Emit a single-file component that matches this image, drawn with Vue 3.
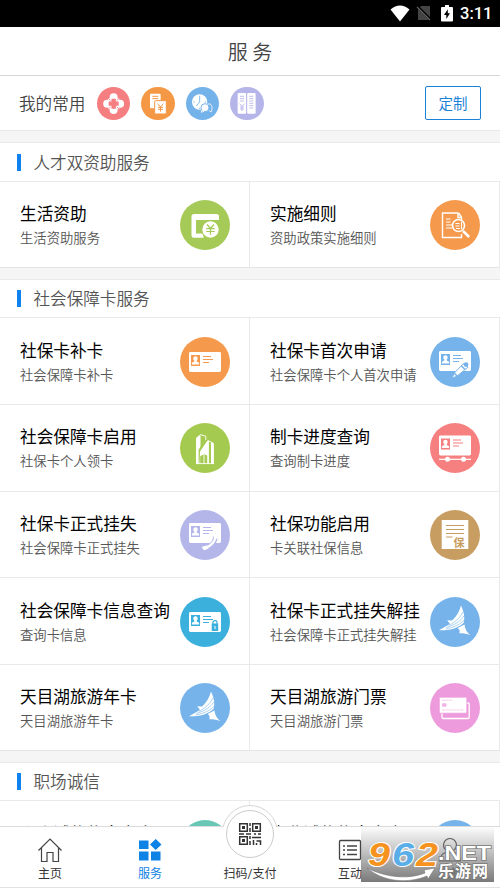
<script setup>
const card = (y = 15, h = 20) => `
  <rect x="9" y="${y}" width="32" height="${h}" rx="1.4" fill="#fff"/>
  <rect x="11" y="${y + 3}" width="9" height="11" fill="currentColor"/>
  <path transform="translate(0 ${y - 15})" d="M15.5 19.2c1.5 0 2.3 1 2.1 2.5-.1 1-.6 1.5-.9 1.9v1l2.4 1.1v1.8h-7.2v-1.8l2.4-1.1v-1c-.4-.4-.9-.9-1-1.9-.1-1.500.7-2.500 2.200-2.500z" fill="#fff"/>
  <path d="M23 ${y + 4.500}h8M23 ${y + 7.500}h10M23 ${y + 10.500}h6" stroke="currentColor" stroke-width="1.200" fill="none"/>`

const bird = `
  <path fill="#fff" d="M31 8.500C34 15 35.200 20.500 33.500 26 28 31.500 19 33.500 9 33.300L20 27l-2.800-3.700 5 .2C26.500 19.500 29.500 14.500 31 8.500z"/>
  <path fill="#fff" d="M27.500 31l7-3.500c.4 4.500 2.400 8 5.800 10.600-4-1.500-7.200-2.100-11-1.900 1-2.200.2-4-1.800-5.200z"/>
  <path d="M32.800 15c-2 5-6.500 9.500-14 13.500M33.800 19c-3 5-9 9-17.500 11.500M34.200 23c-4 4.500-10.500 7.500-18.500 9" fill="none" stroke="currentColor" stroke-width=".6"/>`

const art = {
  flower: `<g fill="#fff"><circle cx="25" cy="15.300" r="6"/><circle cx="25" cy="34.700" r="6"/><circle cx="15.300" cy="25" r="6"/><circle cx="34.700" cy="25" r="6"/><rect x="16.500" y="16.500" width="17" height="17" rx="1"/></g><path d="M25 17.500v15M17.500 25h15" stroke="currentColor" stroke-width="6.500" fill="none"/><path d="M15.500 15.500l5 5M34.500 15.500l-5 5M15.500 34.500l5-5M34.500 34.500l-5-5" stroke="currentColor" stroke-width="1.300"/>`,
  bills: `<rect x="13.500" y="10" width="16" height="22" rx="1.500" fill="#fff"/><path d="M17 14h9M17 17.500h9" stroke="currentColor" stroke-width="1.500"/><rect x="20.500" y="20.500" width="17.500" height="20" rx="1.500" fill="#fff" stroke="currentColor" stroke-width="1.500"/><path d="M25 25l4.300 5 4.300-5M29.300 30v7M25.500 30.500h7.600M25.500 33.500h7.600" stroke="currentColor" stroke-width="1.500" fill="none"/>`,
  clock: `<circle cx="20.500" cy="22.500" r="11.500" fill="#fff"/><path d="M20.500 13v9.500l-5 6M20.500 31v2M11 22.500h2M28 22.500h2" stroke="currentColor" stroke-width="1.300" fill="none"/><circle cx="28.500" cy="31" r="6" fill="#fff" stroke="currentColor" stroke-width="1.500"/><path d="M24 34l-1 4 4-1.500zM32 26q5-3 7 3v5l-1 3-3-1" fill="none" stroke="#fff" stroke-width="1.200"/>`,
  ledger: `<rect x="11.500" y="9" width="12.700" height="31" rx="1.500" fill="#fff"/><rect x="25.800" y="9" width="12.700" height="31" rx="1.500" fill="#fff"/><path d="M15 14h6M15 17.500h6M15 21h6M29 14h6M29 17.500h6M29 21h6M29 24.500h6M29 28h6M29 31.500h6M14.500 25l3.500 4 3.500-4M18 29v7M15 30h6M15 33h6" stroke="currentColor" stroke-width="1.300" fill="none"/>`,
  wallet: `<path d="M14 14h22.500a2.500 2.500 0 0 1 2.500 2.500V20H16v13.500h7.500v4.200h-9.500a2.500 2.500 0 0 1-2.500-2.500V16.500a2.500 2.500 0 0 1 2.500-2.500z" fill="#fff"/><circle cx="30.500" cy="29.500" r="8.800" fill="#fff" stroke="currentColor" stroke-width="1.200"/><path d="M27 24.500l3.500 4 3.500-4M30.500 28.500v6.300M26.300 28.700h8.400M26.300 31.500h8.400" fill="none" stroke="currentColor" stroke-width="1.200"/>`,
  search: `<path d="M28.500 13h-16v24.500h19V34M28.500 13l3 4v3M28 13v4.500h4" fill="none" stroke="#fff" stroke-width="1.400"/><path d="M16 19h4.500M16 22h4.500M16 25h6M16 28h6" stroke="#fff" stroke-width="1.100"/><circle cx="28.500" cy="25.500" r="6" fill="none" stroke="#fff" stroke-width="1.600"/><path d="M25.500 23.500h4M25.500 26h4M26 28.500h4M31.500 22v7" stroke="#fff" stroke-width="1.100"/><path d="M33 31l6.200 6" stroke="#fff" stroke-width="2.500"/>`,
  card: card(),
  edit: card(14) + `<path d="M34 26.200l4 4-11 9-5 2 2.300-5.300z" fill="#fff" stroke="currentColor" stroke-width="1"/><circle cx="36" cy="27.600" r="2.400" fill="currentColor"/><path d="M31.500 29l3.500 3.500M24.300 36l2.700 3" stroke="currentColor" stroke-width="1.500"/>`,
  tower: `<path d="M16 41V15l4.500-3.700v12L18.600 27v14zM20 28.500l7.500-11 1.400.5V41h-1.700v-8.500l-3-1.200-4 1.700v8H19.600zM31 19.300l2.900 1.200V41H31z" fill="#fff"/><path d="M20.500 11.600l5.300 1.600v4M28 17.600l5.500 2.700M16 40.600h18M24 31.500V41" fill="none" stroke="#fff" stroke-width=".9"/>`,
  progress: card(12.500) + `<path d="M9 36.300h32" stroke="#fff" stroke-width="1.200"/><circle cx="17.500" cy="36.300" r="2.500" fill="#fff"/><circle cx="33.500" cy="36.300" r="2.500" fill="#fff"/>`,
  phone: card(13) + `<path d="M35.200 25.500c1 5.500-3.200 10.500-10.500 12.800" fill="none" stroke="currentColor" stroke-width="4.600"/><path d="M35.200 24.500c1 6-3.200 11.300-10.800 13.600" fill="none" stroke="#fff" stroke-width="2.300"/><path d="M33.200 24.200l3.600-.7 1 4.600-3.300.8zM22.200 37.200l4.500-1.300 1.500 2.400-4.200 1.600z" fill="#fff" stroke="#fff" stroke-width=".8" stroke-linejoin="round"/>`,
  insure: `<path d="M11.700 10h26.600v29H11.700z" fill="#fff"/><path d="M16 15.500h18M16 19.500h18M16 23.500h18M16 27h6.500" stroke="currentColor" stroke-width="1.200"/><text x="23.500" y="36.500" font-size="11" font-weight="700" fill="currentColor">保</text>`,
  lock: card() + `<rect x="31.700" y="26.500" width="6.500" height="7.500" fill="currentColor"/><path d="M33 27v-1.500c0-2.500 4-2.500 4 0V27" fill="none" stroke="currentColor" stroke-width="1.200"/><path d="M35 29v3" stroke="#fff"/>`,
  bird,
  tickets: `<rect x="12" y="20" width="27.200" height="15.500" rx="1.200" fill="none" stroke="#fff" stroke-width="1.300"/><rect x="9.300" y="14.200" width="27.500" height="16" rx="1.200" fill="#fff" stroke="currentColor" stroke-width=".8"/><path d="M12 17.200h10M12 27h22.500" stroke="currentColor" stroke-width=".8" stroke-dasharray="3 .6" opacity=".65"/><rect x="12" y="20.300" width="4.500" height="3.500" rx="1" fill="currentColor" opacity=".75"/>`,
  none: ''
}

const favourites = [
  { icon: 'flower', color: '#f47e80' },
  { icon: 'bills', color: '#f59845' },
  { icon: 'clock', color: '#74b2ea' },
  { icon: 'ledger', color: '#b5b5e9' }
]

const sections = [
  { title: '人才双资助服务', items: [
    { title: '生活资助', sub: '生活资助服务', icon: 'wallet', color: '#a6ca57' },
    { title: '实施细则', sub: '资助政策实施细则', icon: 'search', color: '#f59a4c' }
  ] },
  { title: '社会保障卡服务', items: [
    { title: '社保卡补卡', sub: '社会保障卡补卡', icon: 'card', color: '#f59a4c' },
    { title: '社保卡首次申请', sub: '社会保障卡个人首次申请', icon: 'edit', color: '#76b3ea' },
    { title: '社会保障卡启用', sub: '社保卡个人领卡', icon: 'tower', color: '#a5ca50' },
    { title: '制卡进度查询', sub: '查询制卡进度', icon: 'progress', color: '#f67f80' },
    { title: '社保卡正式挂失', sub: '社会保障卡正式挂失', icon: 'phone', color: '#b4b6ea' },
    { title: '社保功能启用', sub: '卡关联社保信息', icon: 'insure', color: '#c89d61' },
    { title: '社会保障卡信息查询', sub: '查询卡信息', icon: 'lock', color: '#3bb0dd' },
    { title: '社保卡正式挂失解挂', sub: '社会保障卡正式挂失解挂', icon: 'bird', color: '#76b3ea' },
    { title: '天目湖旅游年卡', sub: '天目湖旅游年卡', icon: 'bird', color: '#76b3ea' },
    { title: '天目湖旅游门票', sub: '天目湖旅游门票', icon: 'tickets', color: '#ee9bdd' }
  ] },
  { title: '职场诚信', items: [
    { title: '个人诚信信息查询', sub: '', icon: 'none', color: '#69c7b6' },
    { title: '企业诚信信息查询', sub: '', icon: 'none', color: '#76b3ea' }
  ] }
]
</script>

<template>
  <div class="page">
    <div class="status">
      <svg class="wifi" viewBox="0 0 20 17"><path d="M.5 4.500Q10-3.500 19.500 4.500L10 16.500z" fill="#fff" /></svg>
      <svg class="sim" viewBox="0 0 16 18"><path d="M5 2h9v14H2V5z" fill="#444" /><path d="M1 2l14 14" stroke="#000" stroke-width="2.500" /><path d="M1 3l13 13" stroke="#666" stroke-width="1.100" /></svg>
      <svg class="battery" viewBox="0 0 12 17"><path d="M4 0h4v2h3q1 0 1 1v12.500q0 1-1 1H1q-1 0-1-1V3q0-1 1-1h3z" fill="#fff" /><path d="M6.800 4.300L3 10h2.300v4L9 8.300H6.800z" fill="#000" /></svg>
      <span class="time">3:11</span>
    </div>
    <header class="header">服 务</header>

    <main class="content">
      <div class="favourites">
        <span class="fav-label">我的常用</span>
        <span v-for="f in favourites" :key="f.icon" class="disc small" :style="{ color: f.color }">
          <svg viewBox="0 0 50 50" v-html="art[f.icon]"></svg>
        </span>
        <button class="custom">定制</button>
      </div>

      <section v-for="s in sections" :key="s.title" class="section">
        <h2 class="section-title">{{ s.title }}</h2>
        <div class="grid">
          <div v-for="i in s.items" :key="i.title" class="cell">
            <div class="words">
              <div class="name">{{ i.title }}</div>
              <div class="sub">{{ i.sub }}</div>
            </div>
            <span class="disc" :style="{ color: i.color }">
              <svg viewBox="0 0 50 50" v-html="art[i.icon]"></svg>
            </span>
          </div>
        </div>
      </section>
    </main>

    <nav class="nav">
      <div class="tab">
        <svg viewBox="0 0 26 26" fill="none" stroke="#444" stroke-width="1.200"><path d="M1.500 13.500L13 2l11.500 11.500M4.500 11v13.500h5.500v-9h6v9h5.500V11" /></svg>
        <span>主页</span>
      </div>
      <div class="tab active">
        <svg viewBox="0 0 26 26" fill="#0f82e6"><path d="M2 3.500h9.500V12H2zM2 14.500h9.500v9H2zM14 14.500h9.500v9H14zM18.700 2l5.800 5.500-5.800 5.500L13 7.500z" /></svg>
        <span>服务</span>
      </div>
      <div class="tab">
        <div class="scan"><div class="scan-inner">
          <svg viewBox="0 0 24 24" fill="none" stroke="#333" stroke-width="1.500">
            <path d="M1.700 1.700h7.600v7.600H1.700zM14.700 1.700h7.600v7.600h-7.600zM1.700 14.700h7.600v7.600H1.700z" />
            <path d="M4 5.500h3M17 5.500h3M4 18.500h3" stroke-width="3" />
            <path d="M12 1v3M12 6v4M1 12h5M8 12h5M16 12h2M20 12h3M12 14v3M12 19v4M14 15.500h9M15.500 18v5M18.500 19h4v4M18.500 21v2" />
          </svg>
        </div></div>
        <span>扫码/支付</span>
      </div>
      <div class="tab">
        <svg viewBox="0 0 26 26" fill="none" stroke="#444" stroke-width="1.300"><rect x="2.500" y="3.500" width="21" height="19" rx="1" /><path d="M6 9h2M6 13h2M6 17.500h2M10 9h10M10 13h10M10 17.500h10" /></svg>
        <span>互动</span>
      </div>
      <div class="tab">
        <svg viewBox="0 0 26 26" fill="none" stroke="#555" stroke-width="1.200"><circle cx="13" cy="8" r="6.500" /><path d="M2.500 24q1-9 10.500-9.500Q22.500 15 23.500 24z" /></svg>
        <span>我的</span>
      </div>

      <div class="mark">
        <svg viewBox="0 0 133 56">
          <path d="M6 42C24 51 46 54 64 47l-1-3 11-2-7 11-1-3C47 58 22 56 6 42z" fill="#fff" stroke="#777" stroke-width=".6" />
          <g class="digits">
            <text x="7" y="39.500" textLength="22" lengthAdjust="spacingAndGlyphs" fill="#f6931e">9</text>
            <text x="31" y="39.500" textLength="22" lengthAdjust="spacingAndGlyphs" fill="#5aaee8">6</text>
            <text x="55" y="39.500" textLength="22" lengthAdjust="spacingAndGlyphs" fill="#f6931e">2</text>
          </g>
          <text class="net" x="77" y="33.500" textLength="53" lengthAdjust="spacingAndGlyphs">.NET</text>
          <text class="site" x="77" y="51" textLength="50">乐游网</text>
        </svg>
      </div>
    </nav>
  </div>
</template>

<style>
body { background: #fff; }
</style>

<style scoped>
.page {
  width: 500px;
  height: 888px;
  display: flex;
  flex-direction: column;
  overflow: hidden;
  background: #fff;
  font-family: Roboto, "Noto Sans CJK SC", sans-serif;
  color: #000;
}
.page * { box-sizing: border-box; }
.status {
  flex: none;
  height: 26.500px;
  background: #000;
  display: flex;
  align-items: center;
  justify-content: flex-end;
  padding-right: 10px;
  color: #fff;
}
.wifi { width: 20px; height: 17px; margin-right: 6px; }
.sim { width: 16px; height: 18px; margin-right: 9px; }
.battery { width: 12px; height: 17px; margin-right: 7px; }
.time { font-size: 16.500px; font-weight: 500; line-height: 26px; padding-top: 2px; width: 30px; white-space: nowrap; }
.header {
  flex: none;
  height: 49.500px;
  border-bottom: 1px solid #d6d6d6;
  text-align: center;
  font-size: 20px;
  line-height: 49.500px;
  font-weight: 350;
  font-family: "Noto Sans CJK SC", sans-serif;
  color: #444;
}
.content { flex: 1; min-height: 0; overflow: hidden; background: #f5f5f5; }
.favourites {
  height: 55.300px;
  background: #fff;
  border-bottom: 1px solid #e9e9e9;
  display: flex;
  align-items: center;
  padding: 0 19px 0 19px;
}
.fav-label { font-size: 16.600px; font-weight: 350; color: #444; margin-right: 11.500px; }
.disc {
  flex: none;
  width: 50px;
  height: 50px;
  border-radius: 50%;
  background: currentColor;
}
.disc svg { display: block; width: 100%; height: 100%; font-family: "Noto Sans CJK SC", sans-serif; }
.disc.small { width: 33.300px; height: 33.300px; margin-right: 11.200px; }
.custom {
  margin-left: auto;
  width: 56px;
  height: 34px;
  border: 1px solid #1c82d8;
  border-radius: 2px;
  background: #fff;
  color: #1c82d8;
  font: 14.500px/30px "Noto Sans CJK SC", sans-serif;
  padding: 0;
}
.section { margin-top: 11px; background: #fff; border-top: 1px solid #e9e9e9; }
.section-title {
  margin: 0;
  height: 37.600px;
  display: flex;
  align-items: center;
  padding-left: 16.500px;
  font-size: 16.600px;
  font-weight: 350;
  color: #555;
}
.section-title::before { content: ""; width: 4px; height: 17px; margin-right: 13px; background: #0f82f0; }
.grid { display: grid; grid-template-columns: 1fr 1fr; }
.cell {
  height: 86.700px;
  border-top: 1px solid #e9e9e9;
  border-right: 1px solid #e9e9e9;
  display: flex;
  align-items: center;
  justify-content: space-between;
  padding: 1.200px 19px 0 20px;
}
.grid .cell:nth-last-child(-n + 2) { border-bottom: 1px solid #e4e4e4; padding-top: 2px; }
.words { white-space: nowrap; width: 160px; padding-top: 2px; }
.name { font-size: 16.660px; line-height: 24px; }
.sub { font-size: 13.330px; font-weight: 350; line-height: 20px; margin-top: 2px; height: 20px; color: #555; }
.nav {
  flex: none;
  position: relative;
  height: 62.500px;
  background: #fff;
  border-top: 1px solid #dcdcdc;
  border-bottom: 1px solid #e2e2e2;
  display: grid;
  grid-template-columns: repeat(5, 1fr);
  font-size: 12px;
  color: #333;
}
.tab { position: relative; display: flex; flex-direction: column; align-items: center; justify-content: flex-end; padding-bottom: 3.700px; }
.tab > svg { width: 26px; height: 26px; }
.tab > span { position: relative; line-height: 18px; margin-top: 2px; }
.tab.active { color: #0f82e6; }
.scan {
  position: absolute;
  left: 50%;
  top: -21.500px;
  width: 56px;
  height: 56px;
  margin-left: -28px;
  display: flex;
  justify-content: center;
  padding-top: 5px;
  border-radius: 50%;
  background: #fff;
}
.scan::before {
  content: "";
  position: absolute;
  inset: 0;
  border: 1px solid #d6d6d6;
  border-radius: 50%;
  clip-path: inset(0 0 34px 0);
}
.scan-inner { width: 48px; height: 48px; border: 1px solid #ccc; border-radius: 50%; display: flex; align-items: center; justify-content: center; }
.scan-inner svg { width: 24px; height: 24px; }
.mark {
  position: absolute;
  left: 361px;
  top: -1px;
  width: 133px;
  height: 56px;
  background: linear-gradient(rgba(120, 120, 120, 0), rgba(115, 115, 115, .95));
}
.mark svg { display: block; width: 133px; height: 56px; overflow: visible; }
.digits { font: italic 700 34px "Liberation Sans", sans-serif; stroke: #fff; stroke-width: 2px; paint-order: stroke; }
.net { font: 700 20px "Liberation Sans", sans-serif; fill: #fff; stroke: #777; stroke-width: 1.500px; paint-order: stroke; }
.site { font: 700 16px "Noto Sans CJK SC", sans-serif; fill: #fff; stroke: #777; stroke-width: 1.500px; paint-order: stroke; }
</style>
